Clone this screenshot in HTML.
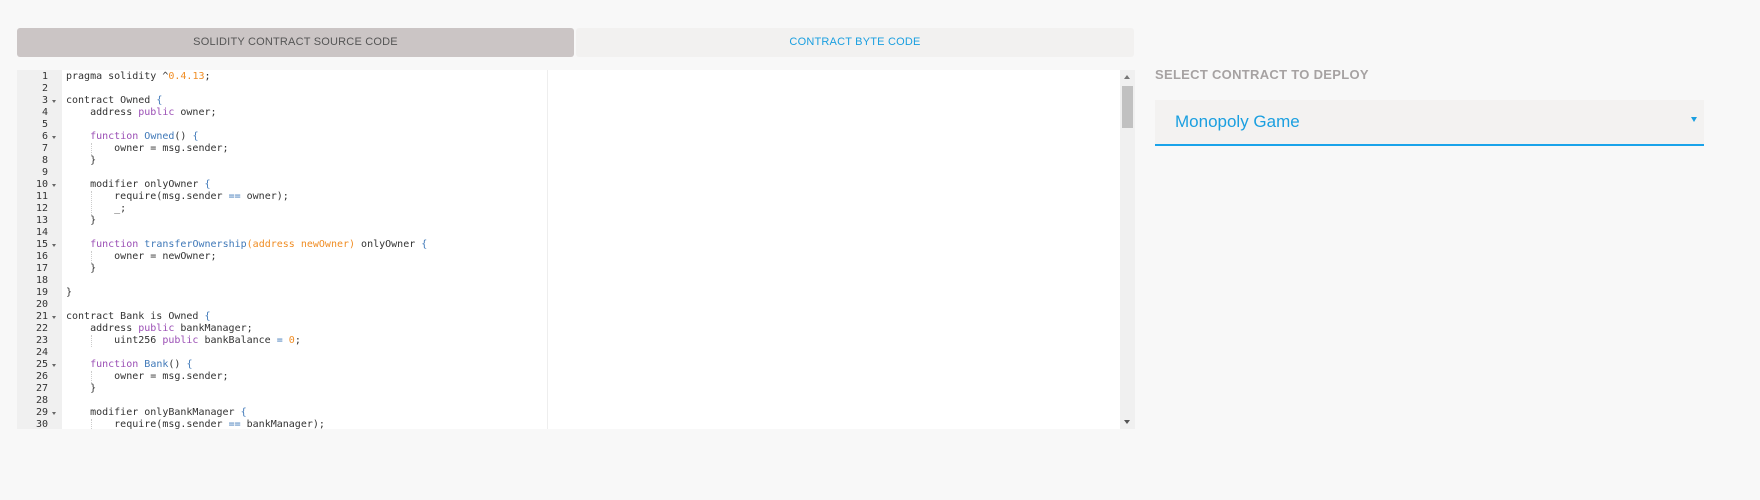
<!DOCTYPE html>
<html><head><meta charset="utf-8"><style>
*{margin:0;padding:0;box-sizing:border-box}
body{width:1760px;height:500px;background:#f8f8f8;position:relative;overflow:hidden;font-family:"Liberation Sans",sans-serif}
.tab{position:absolute;top:28px;height:29px;font-size:11px;line-height:29px;text-align:center;border-radius:3px;letter-spacing:0.2px}
#t1{left:17px;width:557px;background:#cbc5c5;color:#555}
#t2{left:576px;width:558px;background:#f2f1f0;color:#1a9fe0}
#ed{position:absolute;left:17px;top:70px;width:1118px;height:359px;background:#fff;overflow:hidden}
#gut{position:absolute;left:0;top:0;width:45px;height:359px;background:#f0f0f0}
.ln{position:absolute;left:0;width:31px;text-align:right;font:10px/12px "DejaVu Sans Mono","Liberation Mono",monospace;color:#333}
.fa{position:absolute;left:35px;width:0;height:0;border-left:2.5px solid transparent;border-right:2.5px solid transparent;border-top:3px solid #666}
.cl{position:absolute;left:49px;font:10px/12px "DejaVu Sans Mono","Liberation Mono",monospace;color:#333;white-space:pre}
.k{color:#9b4fb5}.f{color:#3f78b8}.n{color:#f08d24}.p{color:#f08d24}.o{color:#3f78b8}
.g{position:absolute;border-left:1px dotted #ccc;width:0}
#pm{position:absolute;left:530px;top:0;width:1px;height:359px;background:#eee}
#sb{position:absolute;left:1103px;top:0;width:15px;height:359px;background:#f0f0f0}
#lab{position:absolute;left:1155px;top:67px;font-size:13px;font-weight:bold;color:#a6a2a2;letter-spacing:0.3px}
#sel{position:absolute;left:1155px;top:100px;width:549px;height:46px;background:#f3f2f1;border-bottom:2px solid #1aa3ea}
#sel span{position:absolute;left:20px;top:12px;font-size:17px;color:#1a9fe0}
#sel i{position:absolute;right:7px;top:17px;width:0;height:0;border-left:3px solid transparent;border-right:3px solid transparent;border-top:5px solid #1a9fe0}
</style></head><body>
<div class="tab" id="t1">SOLIDITY CONTRACT SOURCE CODE</div>
<div class="tab" id="t2">CONTRACT BYTE CODE</div>
<div id="ed">
<div id="gut"></div>
<div id="pm"></div>
<div id="sb"><div style="position:absolute;left:4px;top:5px;border-left:3px solid transparent;border-right:3px solid transparent;border-bottom:4px solid #777"></div><div style="position:absolute;left:2px;top:16px;width:11px;height:42px;background:#c1c1c1"></div><div style="position:absolute;left:4px;top:350px;border-left:3px solid transparent;border-right:3px solid transparent;border-top:4px solid #555"></div></div>
<div class="g" style="left:74px;top:73px;height:12px"></div>
<div class="g" style="left:74px;top:121px;height:24px"></div>
<div class="g" style="left:74px;top:181px;height:12px"></div>
<div class="g" style="left:74px;top:265px;height:12px"></div>
<div class="g" style="left:74px;top:301px;height:12px"></div>
<div class="g" style="left:74px;top:349px;height:12px"></div>
<div id="lines"></div>
</div>
<div id="lab">SELECT CONTRACT TO DEPLOY</div>
<div id="sel"><span>Monopoly Game</span><i></i></div>
<script>
var L=[
'pragma solidity ^<span class="n">0.4.13</span>;','',
'contract Owned <span class="o">{</span>',
'    address <span class="k">public</span> owner;','',
'    <span class="k">function</span> <span class="f">Owned</span>() <span class="o">{</span>',
'        owner = msg.sender;','    }','',
'    modifier onlyOwner <span class="o">{</span>',
'        require(msg.sender <span class="o">==</span> owner);','        _;','    }','',
'    <span class="k">function</span> <span class="f">transferOwnership</span><span class="p">(address newOwner)</span> onlyOwner <span class="o">{</span>',
'        owner = newOwner;','    }','','}','',
'contract Bank is Owned <span class="o">{</span>',
'    address <span class="k">public</span> bankManager;',
'        uint256 <span class="k">public</span> bankBalance <span class="o">=</span> <span class="n">0</span>;','',
'    <span class="k">function</span> <span class="f">Bank</span>() <span class="o">{</span>',
'        owner = msg.sender;','    }','',
'    modifier onlyBankManager <span class="o">{</span>',
'        require(msg.sender <span class="o">==</span> bankManager);'];
var F=[3,6,10,15,21,25,29],h='';
for(var i=0;i<L.length;i++){var y=1+i*12;
h+='<div class="ln" style="top:'+y+'px">'+(i+1)+'</div>';
if(F.indexOf(i+1)>=0)h+='<div class="fa" style="top:'+(y+5)+'px"></div>';
h+='<div class="cl" style="top:'+y+'px">'+L[i]+'</div>';}
document.getElementById('lines').innerHTML=h;
</script>
</body></html>
